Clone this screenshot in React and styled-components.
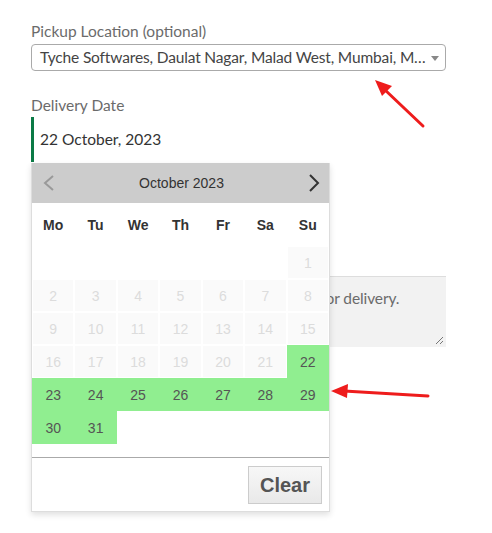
import React from 'react'
import styled, { createGlobalStyle } from 'styled-components'

const GlobalStyle = createGlobalStyle`
  html, body {
    margin: 0;
    padding: 0;
    background: #fff;
  }
  body {
    font-family: Lato, "Noto Sans", sans-serif;
    font-size: 15.5px;
  }
`

const Page = styled.div`
  position: relative;
  width: 446px;
  height: 533px;
  padding: 19px 0 0 31px;
  box-sizing: border-box;
`

const Field = styled.div`
  position: relative;
  margin-top: ${p => p.gap || 0}px;
`

const Label = styled.div`
  color: #6b6b6b;
  line-height: 24px;
  margin-bottom: ${p => p.below || 0}px;
`

const SelectBox = styled.div`
  position: relative;
  height: 27px;
  box-sizing: border-box;
  border: 1px solid #aaa;
  border-radius: 4px;
  padding: 0 16px 0 8px;
  color: #444;
  line-height: 25px;
  letter-spacing: -0.15px;
  white-space: nowrap;
  overflow: hidden;
  text-overflow: ellipsis;

  &::after {
    content: '';
    position: absolute;
    right: 6px;
    top: 11px;
    border-left: 4px solid transparent;
    border-right: 4px solid transparent;
    border-top: 5px solid #888;
  }
`

const DateInput = styled.div`
  height: 45px;
  box-sizing: border-box;
  border-left: 3px solid #0b7a46;
  padding-left: 6px;
  color: #333;
  line-height: 45px;
`

const TextArea = styled.div`
  position: relative;
  height: 71px;
  box-sizing: border-box;
  background: #f2f2f2;
  border-top: 1px solid #ddd;
  padding: 10px 9px;
  color: #6b6b6b;
  line-height: 22px;
  letter-spacing: -0.1px;
  white-space: nowrap;
  overflow: hidden;
`

const Grip = styled.svg`
  position: absolute;
  right: 2px;
  bottom: 2px;
`

const Calendar = styled.div`
  position: absolute;
  left: 0;
  top: 100%;
  margin-top: 1px;
  width: 299px;
  box-sizing: border-box;
  background: #fff;
  border: 1px solid #ddd;
  border-top: none;
  box-shadow: 0 3px 6px rgba(0, 0, 0, 0.12);
  font-family: "Liberation Sans", Arial, sans-serif;
  z-index: 2;
`

const Header = styled.div`
  height: 40px;
  background: #ccc;
  display: flex;
  align-items: center;
  justify-content: space-between;
  padding: 0 8px 0 10px;
  color: #333;
  font-size: 14px;
`

const NavArrow = styled.svg`
  display: block;
`

const Weekdays = styled.div`
  display: grid;
  grid-template-columns: repeat(7, 1fr);
  height: 43px;
  align-items: center;
  text-align: center;
  font-weight: bold;
  font-size: 14px;
  color: #333;
`

const Days = styled.div`
  display: grid;
  grid-template-columns: repeat(7, 1fr);
  grid-auto-rows: 33px;
  padding-bottom: 13px;
  border-bottom: 1px solid #aaa;
`

const Day = styled.div`
  display: flex;
  align-items: center;
  justify-content: center;
  font-size: 14px;
  box-sizing: border-box;
  background: ${p => (p.available ? '#90ee90' : p.empty ? 'transparent' : '#fafafa')};
  color: ${p => (p.available ? '#555' : '#dcdcdc')};
  border: ${p => (p.available || p.empty ? 'none' : '1px solid #fff')};
`

const Footer = styled.div`
  display: flex;
  justify-content: flex-end;
  padding: 8px 7px 7px;
`

const ClearButton = styled.button`
  width: 74px;
  height: 38px;
  border: 1px solid #ccc;
  background: linear-gradient(#f7f7f7, #e9e9e9);
  color: #555;
  font-family: "Liberation Sans", Arial, sans-serif;
  font-weight: bold;
  font-size: 20px;
  padding: 0;
  cursor: pointer;
`

const Annotations = styled.svg`
  position: absolute;
  left: 0;
  top: 0;
  pointer-events: none;
  z-index: 3;
`

const weekdays = ['Mo', 'Tu', 'We', 'Th', 'Fr', 'Sa', 'Su']

// October 2023 starts on a Sunday; days from the 22nd on are bookable
const cells = [
  ...Array(6).fill(null),
  ...Array.from({ length: 31 }, (_, i) => i + 1),
]

const App = () => {
  return (
    <>
      <GlobalStyle />
      <Page>
        <Field>
          <Label below={1}>Pickup Location (optional)</Label>
          <SelectBox>Tyche Softwares, Daulat Nagar, Malad West, Mumbai, Maharashtra, India</SelectBox>
        </Field>

        <Field gap={22}>
          <Label>Delivery Date</Label>
          <DateInput>22 October, 2023</DateInput>

          <Calendar>
            <Header>
              <NavArrow width="14" height="18" viewBox="0 0 14 18">
                <path d="M11 2 L3 9 L11 16" fill="none" stroke="#999" strokeWidth="2" />
              </NavArrow>
              <span>October 2023</span>
              <NavArrow width="14" height="18" viewBox="0 0 14 18">
                <path d="M3 1 L11 9 L3 17" fill="none" stroke="#333" strokeWidth="2" />
              </NavArrow>
            </Header>
            <Weekdays>
              {weekdays.map(d => <div key={d}>{d}</div>)}
            </Weekdays>
            <Days>
              {cells.map((d, i) =>
                d === null
                  ? <Day key={i} empty />
                  : <Day key={i} available={d >= 22}>{d}</Day>
              )}
            </Days>
            <Footer>
              <ClearButton>Clear</ClearButton>
            </Footer>
          </Calendar>
        </Field>

        <Field gap={88}>
          <Label below={2}>Order notes (optional)</Label>
          <TextArea>
            Notes about your order, e.g. special notes for delivery.
            <Grip width="10" height="10" viewBox="0 0 10 10">
              <path d="M9 2 L2 9 M9 6 L6 9" stroke="#777" strokeWidth="1" />
            </Grip>
          </TextArea>
        </Field>

        <Annotations width="492" height="533" viewBox="0 0 492 533">
          <g stroke="#ee1c1c" strokeWidth="3" strokeLinecap="round">
            <line x1="423" y1="126" x2="384" y2="89" />
            <line x1="428" y1="396" x2="344" y2="391" />
          </g>
          <g fill="#ee1c1c">
            <polygon points="375,80 392,86 382,96" />
            <polygon points="331,391 348,384 347,398" />
          </g>
        </Annotations>
      </Page>
    </>
  )
}

export default App
